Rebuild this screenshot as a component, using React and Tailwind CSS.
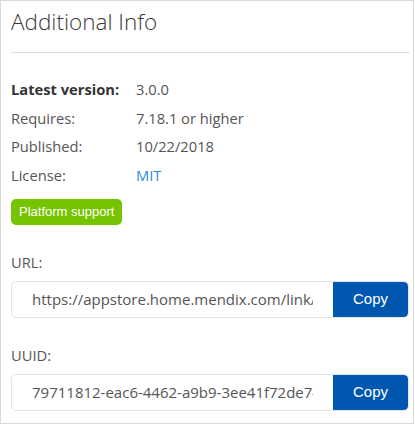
import React from "react";

function Row({ label, value, bold, link }) {
  return (
    <div className="flex h-[28.5px] leading-[28.5px] text-[14.7px]">
      <div className={"w-[125px] " + (bold ? "font-bold text-[#333]" : "text-[#555]")}>{label}</div>
      <div className={link ? "text-[#2a8fd6]" : "text-[#555]"}>{value}</div>
    </div>
  );
}

function CopyField({ value }) {
  return (
    <div className="flex h-[37px] w-[398px] rounded-[5px] border border-[#e4e4e4] overflow-hidden">
      <div className="flex-1 min-w-0 px-[20px]">
        <div className="overflow-hidden whitespace-nowrap text-[15px] leading-[35px] text-[#555]">{value}</div>
      </div>
      <button className="w-[75px] shrink-0 bg-[#0057b0] text-white text-[15px] rounded-r-[4px] font-['Liberation_Sans',Arial,sans-serif]">
        Copy
      </button>
    </div>
  );
}

export default function App() {
  return (
    <div className="w-[414px] h-[424px] border border-[#d9d9d9] bg-white pl-[10px] pr-[4px] font-['Open_Sans',sans-serif] text-[#555]">
      <h1 className="mt-[5px] text-[22.5px] leading-[32px] font-light text-[#3a3a3a]">Additional Info</h1>
      <div className="mt-[14px] h-px bg-[#dddddd] w-[399px]" />
      <div className="mt-[22px]">
        <Row label="Latest version:" value="3.0.0" bold />
        <Row label="Requires:" value="7.18.1 or higher" />
        <Row label="Published:" value="10/22/2018" />
        <Row label="License:" value="MIT" link />
      </div>
      <div className="mt-[10px] inline-flex h-[26px] items-center rounded-[5px] bg-[#76c400] px-[8px] text-[13px] text-white font-['Liberation_Sans',Arial,sans-serif]">
        Platform support
      </div>
      <div className="mt-[27px] text-[14.7px] leading-[20px] text-[#555]">URL:</div>
      <div className="mt-[9px]">
        <CopyField value="https://appstore.home.mendix.com/link/app/109011/" />
      </div>
      <div className="mt-[27px] text-[14.7px] leading-[20px] text-[#555]">UUID:</div>
      <div className="mt-[9px]">
        <CopyField value="79711812-eac6-4462-a9b9-3ee41f72de74" />
      </div>
    </div>
  );
}
